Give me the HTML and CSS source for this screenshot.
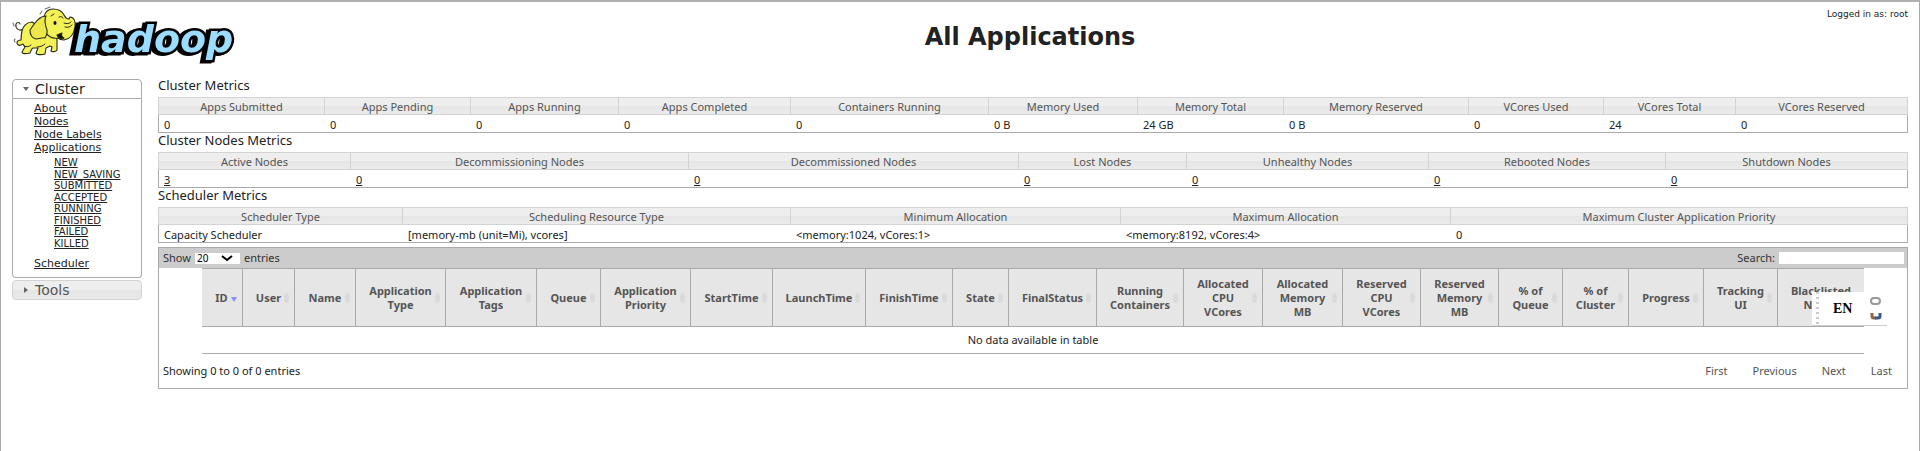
FILE: index.html
```html
<!DOCTYPE html>
<html lang="en">
<head>
<meta charset="utf-8">
<title>All Applications</title>
<link rel="stylesheet" href="styles.css">
</head>
<body>
<header class="header">
  <a class="logo" href="#" aria-label="Hadoop">
    <svg width="240" height="60" viewBox="0 0 240 60">
      <g stroke="#2a2a1a" stroke-width="1.1" stroke-linejoin="round" stroke-linecap="round" fill="#f3f158">
        <path d="M11 23C7 26 3 22 4 18c1-2 4-2 4 0" fill="none"/>
        <path d="M20 16c-5 0-9 4-10 9-1 4-1 6-1 9-2 0-4 1-4 3 1 3 3 3 6 1l2 3-3 5c0 2 4 2 8 1 1-2 1-4 3-5l5 0-2 5c0 2 6 2 9 1l1-6 4-2 2 1-1 4c1 1 5 1 6-1V32z"/>
        <path d="M32 11c1-5 4-8 9-8 5 0 9 2 11 6 1 2 3 4 5 4l1-2c4 0 6 5 5 10-1 7-5 12-11 13-3 0-5-1-6-2-6 1-11-2-13-7z"/>
        <path d="M34 10c-6 0-10 5-16 14 0 5 2 8 6 9 4 0 6-2 9-1 2-3 3-7 1-11-1-4-2-7 0-11z" fill="#ece84a"/>
        <path d="M45 29l5-2c-1 2 0 4 2 5-3 2-6 0-7-3z" fill="#111"/>
        <path d="M39 10l3-2M47 11c2-1 4 0 4 1M52 17c3 1 5 1 7-1M53 21c3 1 5 0 7-2M25 41c3 0 6-1 8-3M12 40c3 1 5 1 7-1" fill="none" stroke-width="1"/>
        <path d="M2 20l-1-3M3 36c-1-1-1-2 0-3M33 3l5-2M28 8l2-3" fill="none" stroke="#777"/>
      </g>
      <ellipse cx="43" cy="17" rx="1.5" ry="2" fill="#111"/>
      <text x="62" y="46" class="wordmark">hadoop</text>
    </svg>
  </a>
  <h1 class="title">All Applications</h1>
  <div class="user">Logged in as: root</div>
</header>
<div class="page">
  <nav class="sidebar">
    <section class="panel">
      <h3 class="panel-head open"><button type="button"><svg width="6" height="4"><path d="M0 0h6L3 4z"/></svg>Cluster</button></h3>
      <ul class="menu">
        <li><a href="#">About</a></li>
        <li><a href="#">Nodes</a></li>
        <li><a href="#">Node Labels</a></li>
        <li><a href="#">Applications</a>
          <ul class="submenu">
            <li><a href="#">NEW</a></li>
            <li><a href="#">NEW_SAVING</a></li>
            <li><a href="#">SUBMITTED</a></li>
            <li><a href="#">ACCEPTED</a></li>
            <li><a href="#">RUNNING</a></li>
            <li><a href="#">FINISHED</a></li>
            <li><a href="#">FAILED</a></li>
            <li><a href="#">KILLED</a></li>
          </ul>
        </li>
        <li><a href="#">Scheduler</a></li>
      </ul>
    </section>
    <section class="panel">
      <h3 class="panel-head closed"><button type="button"><svg width="6" height="6"><path d="M1 0l4 3-4 3z"/></svg>Tools</button></h3>
    </section>
  </nav>
  <main class="content">
    <h2 class="heading">Cluster Metrics</h2>
    <table class="metrics cluster">
      <thead><tr><th>Apps Submitted</th><th>Apps Pending</th><th>Apps Running</th><th>Apps Completed</th><th>Containers Running</th><th>Memory Used</th><th>Memory Total</th><th>Memory Reserved</th><th>VCores Used</th><th>VCores Total</th><th>VCores Reserved</th></tr></thead>
      <tbody><tr><td>0</td><td>0</td><td>0</td><td>0</td><td>0</td><td>0 B</td><td>24 GB</td><td>0 B</td><td>0</td><td>24</td><td>0</td></tr></tbody>
    </table>
    <h2 class="heading">Cluster Nodes Metrics</h2>
    <table class="metrics nodes">
      <thead><tr><th>Active Nodes</th><th>Decommissioning Nodes</th><th>Decommissioned Nodes</th><th>Lost Nodes</th><th>Unhealthy Nodes</th><th>Rebooted Nodes</th><th>Shutdown Nodes</th></tr></thead>
      <tbody><tr><td><a href="#">3</a></td><td><a href="#">0</a></td><td><a href="#">0</a></td><td><a href="#">0</a></td><td><a href="#">0</a></td><td><a href="#">0</a></td><td><a href="#">0</a></td></tr></tbody>
    </table>
    <h2 class="heading">Scheduler Metrics</h2>
    <table class="metrics scheduler">
      <thead><tr><th>Scheduler Type</th><th>Scheduling Resource Type</th><th>Minimum Allocation</th><th>Maximum Allocation</th><th>Maximum Cluster Application Priority</th></tr></thead>
      <tbody><tr><td>Capacity Scheduler</td><td>[memory-mb (unit=Mi), vcores]</td><td>&lt;memory:1024, vCores:1&gt;</td><td>&lt;memory:8192, vCores:4&gt;</td><td>0</td></tr></tbody>
    </table>
    <section class="apps-box">
      <div class="toolbar">
        <label class="length">Show
          <select><option>20</option></select>
          entries</label>
        <label class="search">Search: <input type="text"></label>
      </div>
      <table class="apps">
        <thead><tr>
          <th class="sorted"><div><span>ID</span></div></th>
          <th><div><span>User</span></div></th>
          <th><div><span>Name</span></div></th>
          <th><div><span>Application<br>Type</span></div></th>
          <th><div><span>Application<br>Tags</span></div></th>
          <th><div><span>Queue</span></div></th>
          <th><div><span>Application<br>Priority</span></div></th>
          <th><div><span>StartTime</span></div></th>
          <th><div><span>LaunchTime</span></div></th>
          <th><div><span>FinishTime</span></div></th>
          <th><div><span>State</span></div></th>
          <th><div><span>FinalStatus</span></div></th>
          <th><div><span>Running<br>Containers</span></div></th>
          <th><div><span>Allocated<br>CPU<br>VCores</span></div></th>
          <th><div><span>Allocated<br>Memory<br>MB</span></div></th>
          <th><div><span>Reserved<br>CPU<br>VCores</span></div></th>
          <th><div><span>Reserved<br>Memory<br>MB</span></div></th>
          <th><div><span>% of<br>Queue</span></div></th>
          <th><div><span>% of<br>Cluster</span></div></th>
          <th><div><span>Progress</span></div></th>
          <th><div><span>Tracking<br>UI</span></div></th>
          <th><div><span>Blacklisted<br>Nodes</span></div></th>
        </tr></thead>
        <tbody><tr><td colspan="22">No data available in table</td></tr></tbody>
      </table>
      <div class="footer">
        <div>Showing 0 to 0 of 0 entries</div>
        <div class="pager"><button type="button">First</button><button type="button">Previous</button><button type="button">Next</button><button type="button">Last</button></div>
      </div>
      <div class="ime">
        <span class="grip"></span><span class="lang">EN</span>
        <svg width="14" height="26" viewBox="0 0 14 26" fill="none">
          <rect x="2" y="2" width="9" height="6" rx="3" stroke="#999" stroke-width="2"/>
          <path d="M3 17v3q0 2 2 2h2" stroke="#8a6248" stroke-width="3"/><path d="M6 22h3q2 0 2-2v-3" stroke="#345a88" stroke-width="3"/>
        </svg>
      </div>
    </section>
  </main>
</div>
</body>
</html>
```
FILE: styles.css
```css
* { box-sizing: border-box; }
body {
  margin: 0;
  min-height: 100vh;
  padding: 4px 11px 0;
  border: 1px solid #aaa;
  border-top: 2px solid #b0b0b0;
  border-bottom: 0;
  background: #fff;
  color: #222;
  font: 11px/16px "Noto Sans", "Open Sans", sans-serif;
}
h1, h2, h3, ul { margin: 0; padding: 0; font-weight: normal; }
ul { list-style: none; }
a { color: #222; }
button { border: 0; padding: 0; background: none; color: inherit; font: inherit; }

.header { display: grid; grid-template-columns: 250px 1fr 120px; height: 73px; }
.logo { display: block; }
.wordmark { font: italic bold 38px "DejaVu Sans", sans-serif; paint-order: stroke; fill: #9bdcff; stroke: #000; stroke-width: 5px; filter: drop-shadow(-3px 1px 0 #000); }
.title { padding: 16px 0 0 10px; text-align: center; font: bold 24px/30px "DejaVu Sans", sans-serif; }
.user { font: 9px/16px "DejaVu Sans", sans-serif; text-align: right; }

.page { display: flex; gap: 16px; align-items: flex-start; }
.sidebar { flex: none; width: 130px; font-family: "DejaVu Sans", sans-serif; }
.panel { margin-bottom: 2px; }
.panel-head { border: 1px solid #aaa; height: 20px; font-size: 14px; line-height: 18px; }
.panel-head button { display: flex; align-items: center; gap: 6px; width: 100%; padding-left: 10px; cursor: pointer; }
.panel-head svg { fill: #666; }
.panel-head.open { border-radius: 4px 4px 0 0; }
.panel-head.closed { border-color: #d3d3d3; border-radius: 4px; color: #555; background: linear-gradient(#eee 50%, #e5e5e5 50%, #eaeaea); }
.menu { padding: 3px 0 7px 21px; border: 1px solid #aaa; border-top: 0; border-radius: 0 0 4px 4px; font-size: 11px; line-height: 13px; }
.submenu { display: grid; grid-auto-rows: 1fr; height: 103px; padding: 3px 0 8px 20px; font-size: 10px; line-height: 11px; }

.content { flex: 1; min-width: 0; }
.heading { height: 18px; font-size: 13px; line-height: 13px; }
table { border-spacing: 0; table-layout: fixed; width: 100%; }
.metrics { margin-bottom: 1px; }
.metrics th { padding: 1px 0 0; height: 18px; border: solid #d3d3d3; border-width: 1px 1px 1px 0; background: linear-gradient(#eee 50%, #e6e6e6 50%, #ebebeb); color: #555; font-weight: normal; line-height: 15px; }
.metrics th:first-child { border-left-width: 1px; }
.metrics td { padding: 3px 5px 0; height: 18px; border-bottom: 1px solid #aaa; line-height: 14px; }
.metrics td:first-child { border-left: 1px solid #aaa; }
.metrics td:last-child { border-right: 1px solid #aaa; }

.cluster th:nth-child(1) { width: 167px; }
.cluster th:nth-child(2) { width: 146px; }
.cluster th:nth-child(3) { width: 148px; }
.cluster th:nth-child(4) { width: 172px; }
.cluster th:nth-child(5) { width: 198px; }
.cluster th:nth-child(6) { width: 149px; }
.cluster th:nth-child(7) { width: 146px; }
.cluster th:nth-child(8) { width: 185px; }
.cluster th:nth-child(9) { width: 135px; }
.cluster th:nth-child(10) { width: 132px; }
.cluster th:nth-child(11) { width: 172px; }

.nodes th:nth-child(1) { width: 193px; }
.nodes th:nth-child(2) { width: 338px; }
.nodes th:nth-child(3) { width: 330px; }
.nodes th:nth-child(4) { width: 168px; }
.nodes th:nth-child(5) { width: 242px; }
.nodes th:nth-child(6) { width: 237px; }
.nodes th:nth-child(7) { width: 242px; }

.scheduler { margin-bottom: 4px; }
.scheduler th:nth-child(1) { width: 245px; }
.scheduler th:nth-child(2) { width: 388px; }
.scheduler th:nth-child(3) { width: 330px; }
.scheduler th:nth-child(4) { width: 330px; }
.scheduler th:nth-child(5) { width: 457px; }

.apps-box { position: relative; border: 1px solid #aaa; }
.toolbar { display: flex; justify-content: space-between; align-items: center; height: 20px; padding: 0 3px 0 4px; background: #ccc; color: #333; }
.length, .search { display: flex; align-items: center; gap: 4px; }
.length select {
  width: 45px; height: 11px; padding: 0 2px; border: 0; border-radius: 0; appearance: none; font: 10px/11px "Noto Sans", sans-serif; color: #000;
  background: #fff url("data:image/svg+xml,%3Csvg xmlns='http://www.w3.org/2000/svg' width='12' height='7'%3E%3Cpath d='M1 1l5 4 5-4' fill='none' stroke='%23000' stroke-width='2'/%3E%3C/svg%3E") no-repeat right 7px center;
}
.search input { width: 125px; height: 12px; border: 0; padding: 0 2px; font: inherit; }

.apps { width: 95%; margin: 0 auto; }
.apps th { height: 59px; padding: 0; border: solid #aaa; border-width: 1px 1px 1px 0; background: #e6e6e6; color: #555; font-weight: bold; line-height: 14px; white-space: nowrap; }
.apps th:last-child { border-right: 0; }
.apps th div { display: flex; justify-content: center; align-items: center; padding: 0 5px 0 10px; }
.apps th span { flex: 1; min-width: 0; text-align: center; }
.apps th div::after { content: ""; flex: none; width: 5px; height: 10px; border-radius: 50%; background: #dadada; }
.apps th.sorted div::after { width: 0; height: 0; margin-top: 4px; border: solid transparent; border-width: 5px 3px 0; border-top-color: #8c8cff; border-radius: 0; background: none; }
.apps td { height: 27px; padding: 0; border-bottom: 1px solid #aaa; text-align: center; }
.apps th:nth-child(1) { width: 41px; }
.apps th:nth-child(2) { width: 52px; }
.apps th:nth-child(3) { width: 61px; }
.apps th:nth-child(4) { width: 90px; }
.apps th:nth-child(5) { width: 91px; }
.apps th:nth-child(6) { width: 64px; }
.apps th:nth-child(7) { width: 90px; }
.apps th:nth-child(8) { width: 82px; }
.apps th:nth-child(9) { width: 93px; }
.apps th:nth-child(10) { width: 87px; }
.apps th:nth-child(11) { width: 56px; }
.apps th:nth-child(12) { width: 88px; }
.apps th:nth-child(13) { width: 87px; }
.apps th:nth-child(14) { width: 79px; }
.apps th:nth-child(15) { width: 80px; }
.apps th:nth-child(16) { width: 78px; }
.apps th:nth-child(17) { width: 78px; }
.apps th:nth-child(18) { width: 64px; }
.apps th:nth-child(19) { width: 66px; }
.apps th:nth-child(20) { width: 75px; }
.apps th:nth-child(21) { width: 74px; }
.apps th:nth-child(22) { width: 86px; }

.footer { display: flex; justify-content: space-between; align-items: center; height: 34px; padding: 0 15px 0 4px; }
.pager { display: flex; gap: 25px; color: #555; }

.ime { position: absolute; right: 20px; top: 44px; display: flex; align-items: center; width: 75px; height: 34px; padding: 0 4px; border-bottom: 1px solid #ccc; background: #fff; }
.grip { width: 3px; height: 100%; margin-right: 14px; background: repeating-linear-gradient(#ccc 0 2px, #fff 2px 5px); }
.lang { flex: 1; color: #000; font: bold 14px/16px "Liberation Serif", serif; }
```
